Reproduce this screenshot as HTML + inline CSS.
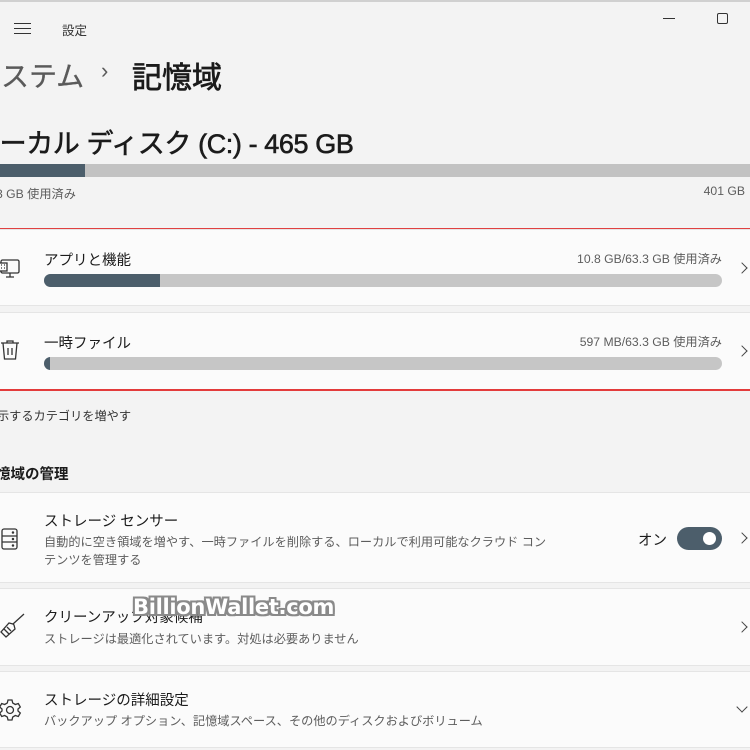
<!DOCTYPE html>
<html><head><meta charset="utf-8"><style>
*{margin:0;padding:0;box-sizing:border-box}
body{width:750px;height:750px;overflow:hidden;background:#f3f3f3;position:relative;font-family:"Liberation Sans","Noto Sans CJK JP",sans-serif;color:#1b1b1b}
.a{position:absolute;white-space:nowrap}
.card{position:absolute;left:-10px;width:770px;background:#fbfbfb;border:1px solid #e5e5e5;border-radius:4px}
.t{font-size:14.5px;color:#1b1b1b}
.d{font-size:12.2px;color:#5d5d5d}
.bar{position:absolute;height:13px;border-radius:7px;background:#c6c6c6;overflow:hidden}
.bar i{position:absolute;left:0;top:0;bottom:0;background:#4c5e6b}
.chev{position:absolute;width:8px;height:8px;border-right:1.3px solid #444;border-top:1.3px solid #444;transform:rotate(45deg)}
</style></head><body>
<div class="a" style="left:0;top:0;width:750px;height:2px;background:#d0d0d0"></div>
<div class="a" style="left:14px;top:23px;width:17px;height:1.3px;background:#333"></div>
<div class="a" style="left:14px;top:28px;width:17px;height:1.3px;background:#333"></div>
<div class="a" style="left:14px;top:33px;width:17px;height:1.3px;background:#333"></div>
<div class="a" style="left:62px;top:20px;font-size:12.5px;color:#333">設定</div>
<div class="a" style="left:663px;top:18px;width:12px;height:1.3px;background:#333"></div>
<div class="a" style="left:717px;top:13px;width:11px;height:11px;border:1.3px solid #333;border-radius:2px"></div>
<div class="a" style="left:-27px;top:55px;font-size:28px;color:#5a5a5a;-webkit-text-stroke:.3px #5a5a5a">システム</div>
<div class="a" style="left:101px;top:58px;font-size:22px;color:#5a5a5a">›</div>
<div class="a" style="left:132px;top:53px;font-size:30px;color:#1b1b1b;-webkit-text-stroke:.7px #1b1b1b">記憶域</div>
<div class="a" style="left:-27px;top:122px;font-size:27px;letter-spacing:-0.4px;color:#1b1b1b;-webkit-text-stroke:.6px #1b1b1b">ローカル ディスク (C:) - 465 GB</div>
<div class="a" style="left:0;top:164px;width:750px;height:13px;background:#c2c2c2"></div>
<div class="a" style="left:0;top:164px;width:85px;height:13px;background:#4c5e6b"></div>
<div class="a" style="left:-4px;top:184px;font-size:12.2px;color:#5d5d5d">3 GB 使用済み</div>
<div class="a" style="right:5px;top:184px;font-size:12.2px;color:#5d5d5d">401 GB</div>
<div class="card" style="top:229px;height:77px"></div>
<div class="a" style="left:0;top:228px;width:750px;height:1px;background:#e04040"></div>
<svg class="a" style="left:-2px;top:258px" width="24" height="22" viewBox="0 0 24 22" fill="none" stroke="#333" stroke-width="1.3"><rect x="3" y="2" width="18" height="13" rx="1.5"/><path d="M8 19h8M12 15v4"/><rect x="1" y="5" width="8" height="8" fill="#fbfbfb"/><path d="M3 7h1M6 7h1M3 10h1M6 10h1"/></svg>
<div class="a t" style="left:44px;top:249px">アプリと機能</div>
<div class="a d" style="right:28px;top:249px">10.8 GB/63.3 GB 使用済み</div>
<div class="bar" style="left:44px;top:274px;width:678px"><i style="width:116px"></i></div>
<div class="chev" style="left:738px;top:264px"></div>
<div class="card" style="top:312px;height:77px;border-bottom:none;border-radius:4px 4px 0 0"></div>
<div class="a" style="left:0;top:389px;width:750px;height:1.5px;background:#e33b3b;z-index:5"></div>
<svg class="a" style="left:0;top:339px" width="20" height="22" viewBox="0 0 20 22" fill="none" stroke="#333" stroke-width="1.3"><path d="M1 4h18M7 4V2h6v2M3 4l1.5 16h11L17 4M8 9v7M12 9v7"/></svg>
<div class="a t" style="left:44px;top:332px">一時ファイル</div>
<div class="a d" style="right:28px;top:332px">597 MB/63.3 GB 使用済み</div>
<div class="bar" style="left:44px;top:357px;width:678px"><i style="width:6px"></i></div>
<div class="chev" style="left:738px;top:347px"></div>
<div class="a" style="left:-3px;top:406px;font-size:12.2px;color:#333">示するカテゴリを増やす</div>
<div class="a" style="left:-4px;top:463px;font-size:14.5px;font-weight:bold;color:#1b1b1b">憶域の管理</div>
<div class="card" style="top:492px;height:91px"></div>
<svg class="a" style="left:0;top:527px" width="20" height="24" viewBox="0 0 20 24" fill="none" stroke="#333" stroke-width="1.3"><rect x="2" y="2" width="15" height="20" rx="2"/><path d="M2 9h15M2 15h15"/><circle cx="13" cy="5.5" r=".6"/><circle cx="13" cy="12" r=".6"/><circle cx="13" cy="18.5" r=".6"/></svg>
<div class="a t" style="left:44px;top:510px">ストレージ センサー</div>
<div class="a d" style="left:44px;top:532px">自動的に空き領域を増やす、一時ファイルを削除する、ローカルで利用可能なクラウド コン</div>
<div class="a d" style="left:44px;top:550px">テンツを管理する</div>
<div class="a" style="left:638px;top:529px;font-size:14.5px;color:#1b1b1b">オン</div>
<div class="a" style="left:677px;top:527px;width:45px;height:23px;border-radius:12px;background:#4c5e6b"></div>
<div class="a" style="left:703px;top:532px;width:13px;height:13px;border-radius:50%;background:#fff"></div>
<div class="chev" style="left:738px;top:534px"></div>
<div class="card" style="top:588px;height:78px"></div>
<svg class="a" style="left:0;top:612px" width="26" height="28" viewBox="0 0 26 28" fill="none" stroke="#333" stroke-width="1.3"><path d="M24 2L13 12M13 12l-4-1-8 9 5 5 9-8-1-4zM4 17l5 5M7 15l4 4"/></svg>
<div class="a t" style="left:44px;top:606px">クリーンアップ対象候補</div>
<div class="a d" style="left:44px;top:629px">ストレージは最適化されています。対処は必要ありません</div>
<div class="a" style="left:133px;top:595px;font-size:21px;font-weight:bold;color:#fff;font-family:'DejaVu Sans',sans-serif;text-shadow:-2px -2px 0 #8a8a8a,2px -2px 0 #8a8a8a,-2px 2px 0 #8a8a8a,2px 2px 0 #8a8a8a,0 2px 0 #8a8a8a,0 -2px 0 #8a8a8a,2px 0 0 #8a8a8a,-2px 0 0 #8a8a8a;letter-spacing:-0.3px">BillionWallet.com</div>
<div class="chev" style="left:738px;top:623px"></div>
<div class="card" style="top:671px;height:77px"></div>
<svg class="a" style="left:0;top:698px" width="22" height="24" viewBox="0 0 22 24" fill="none" stroke="#333" stroke-width="1.3"><circle cx="10" cy="12" r="3.5"/><path d="M8 2h4l.7 3 2.6 1.5 3-1 2 3.5-2.3 2v2l2.3 2-2 3.5-3-1L12.7 19 12 22H8l-.7-3-2.6-1.5-3 1-2-3.5 2.3-2v-2L-.3 9l2-3.5 3 1L7.3 5z"/></svg>
<div class="a t" style="left:44px;top:689px">ストレージの詳細設定</div>
<div class="a d" style="left:44px;top:711px">バックアップ オプション、記憶域スペース、その他のディスクおよびボリューム</div>
<div class="chev" style="left:738px;top:703px;transform:rotate(135deg)"></div>
</body></html>
